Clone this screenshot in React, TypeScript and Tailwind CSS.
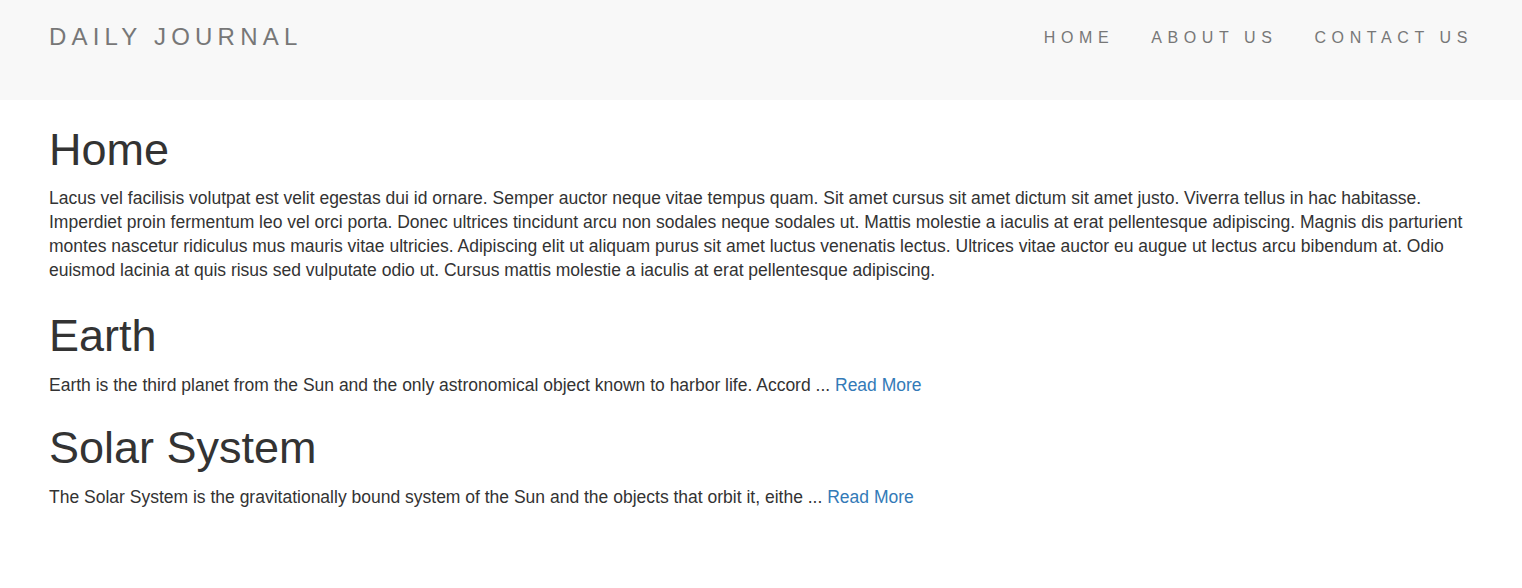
const posts = [
  {
    title: "Earth",
    body: "Earth is the third planet from the Sun and the only astronomical object known to harbor life. Accord ...",
    headingGap: "mt-[29px]",
    bodyGap: "mt-[13px]",
  },
  {
    title: "Solar System",
    body: "The Solar System is the gravitationally bound system of the Sun and the objects that orbit it, eithe ...",
    headingGap: "mt-[26px]",
    bodyGap: "mt-[12px]",
  },
];

export default function App() {
  return (
    <div className="min-h-screen bg-white font-['Liberation_Sans',Arial,sans-serif] text-[#333]">
      {/* Navbar */}
      <nav className="h-[100px] bg-[#f8f8f8] px-[49px] flex justify-between items-start">
        <a href="#" className="mt-[25px] text-[24px] leading-[24px] tracking-[5.2px] text-[#777]">
          DAILY JOURNAL
        </a>
        <ul className="mt-[30px] flex gap-[37px] text-[16px] leading-[16px] tracking-[5.6px] text-[#777]">
          <li><a href="#">HOME</a></li>
          <li><a href="#">ABOUT US</a></li>
          <li><a href="#">CONTACT US</a></li>
        </ul>
      </nav>

      <main className="px-[49px]">
        <h1 className="mt-[25px] text-[45px] leading-[1.1]">Home</h1>
        <p className="mt-[11px] text-[17.5px] leading-[24px]">
          Lacus vel facilisis volutpat est velit egestas dui id ornare. Semper auctor neque vitae tempus quam. Sit amet cursus sit amet dictum sit amet justo. Viverra tellus in hac habitasse. Imperdiet proin fermentum leo vel orci porta. Donec ultrices tincidunt arcu non sodales neque sodales ut. Mattis molestie a iaculis at erat pellentesque adipiscing. Magnis dis parturient montes nascetur ridiculus mus mauris vitae ultricies. Adipiscing elit ut aliquam purus sit amet luctus venenatis lectus. Ultrices vitae auctor eu augue ut lectus arcu bibendum at. Odio euismod lacinia at quis risus sed vulputate odio ut. Cursus mattis molestie a iaculis at erat pellentesque adipiscing.
        </p>

        {posts.map((post) => (
          <div key={post.title}>
            <h1 className={`${post.headingGap} text-[45px] leading-[1.1]`}>{post.title}</h1>
            <p className={`${post.bodyGap} text-[17.5px] leading-[24px]`}>
              {post.body}{" "}
              <a href="#" className="text-[#337ab7]">Read More</a>
            </p>
          </div>
        ))}
      </main>
    </div>
  );
}
